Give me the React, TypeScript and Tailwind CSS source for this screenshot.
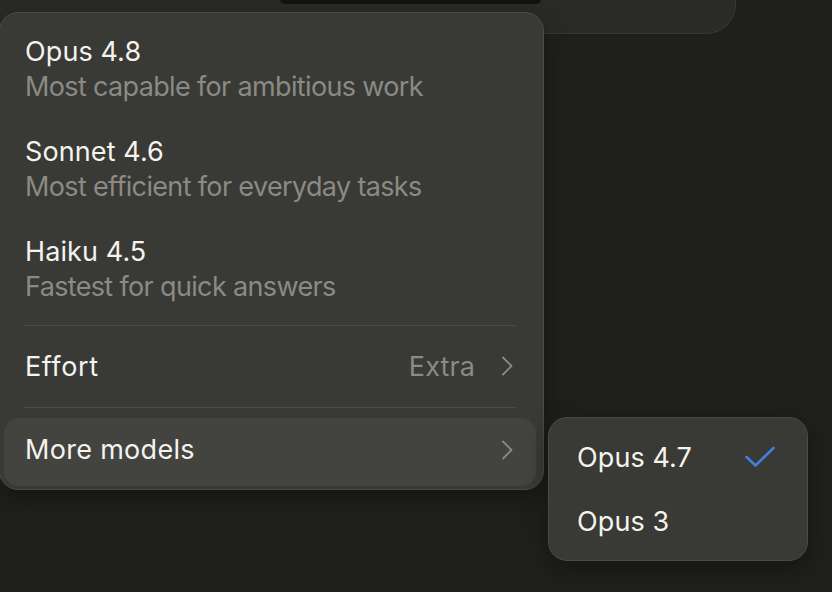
import React from "react";

type Model = { name: string; blurb: string };

const models: Model[] = [
  { name: "Opus 4.8", blurb: "Most capable for ambitious work" },
  { name: "Sonnet 4.6", blurb: "Most efficient for everyday tasks" },
  { name: "Haiku 4.5", blurb: "Fastest for quick answers" },
];

function Chevron({ className }: { className?: string }) {
  return (
    <svg
      width="16"
      height="24"
      viewBox="0 0 16 24"
      fill="none"
      className={className}
    >
      <path
        d="M4 3.5 L12.5 12 L4 20.5"
        stroke="currentColor"
        strokeWidth="1.8"
        strokeLinecap="round"
        strokeLinejoin="round"
      />
    </svg>
  );
}

function Check() {
  return (
    <svg width="30" height="22" viewBox="0 0 30 22" fill="none">
      <path
        d="M1.5 11 L10.5 19.5 L28.5 2"
        stroke="#3f7ee3"
        strokeWidth="2.6"
        strokeLinecap="round"
        strokeLinejoin="round"
      />
    </svg>
  );
}

export default function App() {
  return (
    <div
      className="relative w-[832px] h-[592px] overflow-hidden bg-[#1f1f1d] text-[27px] tracking-[0.1px]"
      style={{ fontFamily: "Inter, 'Noto Sans', sans-serif" }}
    >
      {/* composer panel behind the menu */}
      <div className="w-[736px] h-[35px] -mt-px rounded-br-[30px] border-b border-r border-[#383835] bg-[#2a2a28]">
        <div className="ml-[280px] w-[261px] h-[5px] rounded-b-[9px] bg-[#121211]" />
      </div>

      {/* model picker */}
      <div className="absolute left-[-1px] top-[12px] w-[545px] rounded-[19px] border border-[#4b4a46] bg-[#393935] px-[4px] pt-[6px] pb-[3px] shadow-[0_8px_24px_rgba(0,0,0,0.35)]">
        {models.map((m) => (
          <div key={m.name} className="px-[21px] py-[15px] leading-[35px]">
            <div className="text-[#f4f3ee]">{m.name}</div>
            <div className="text-[#8b8a84] tracking-[-0.65px]">{m.blurb}</div>
          </div>
        ))}

        <div className="ml-[20px] mr-[23px] mt-[6px] h-px bg-[#4d4c48]" />

        <div className="flex items-center justify-between pl-[21px] pr-[24px] h-[69px] my-[6px] pb-[1px] leading-[35px]">
          <span className="text-[#f4f3ee] tracking-[0.6px]">Effort</span>
          <span className="flex items-center gap-[24px] text-[#8b8a84]">
            <span>Extra</span>
            <Chevron className="text-[#8b8a84]" />
          </span>
        </div>

        <div className="ml-[20px] mr-[23px] h-px bg-[#4d4c48]" />

        <div className="mt-[10px] mr-[3px] flex items-center justify-between h-[68px] pb-[5px] pl-[21px] pr-[21px] rounded-[15px] bg-[#43433f] leading-[35px]">
          <span className="text-[#f4f3ee] tracking-[0.3px]">More models</span>
          <Chevron className="text-[#8b8a84]" />
        </div>
      </div>

      {/* submenu */}
      <div className="absolute left-[548px] top-[417px] w-[260px] rounded-[19px] border border-[#4b4a46] bg-[#393935] py-[7px] shadow-[0_8px_24px_rgba(0,0,0,0.35)]">
        <div className="flex items-center justify-between h-[64px] pl-[28px] pr-[32px] leading-[35px]">
          <span className="text-[#f4f3ee]">Opus 4.7</span>
          <Check />
        </div>
        <div className="flex items-center h-[64px] pl-[28px] leading-[35px]">
          <span className="text-[#f4f3ee]">Opus 3</span>
        </div>
      </div>
    </div>
  );
}
